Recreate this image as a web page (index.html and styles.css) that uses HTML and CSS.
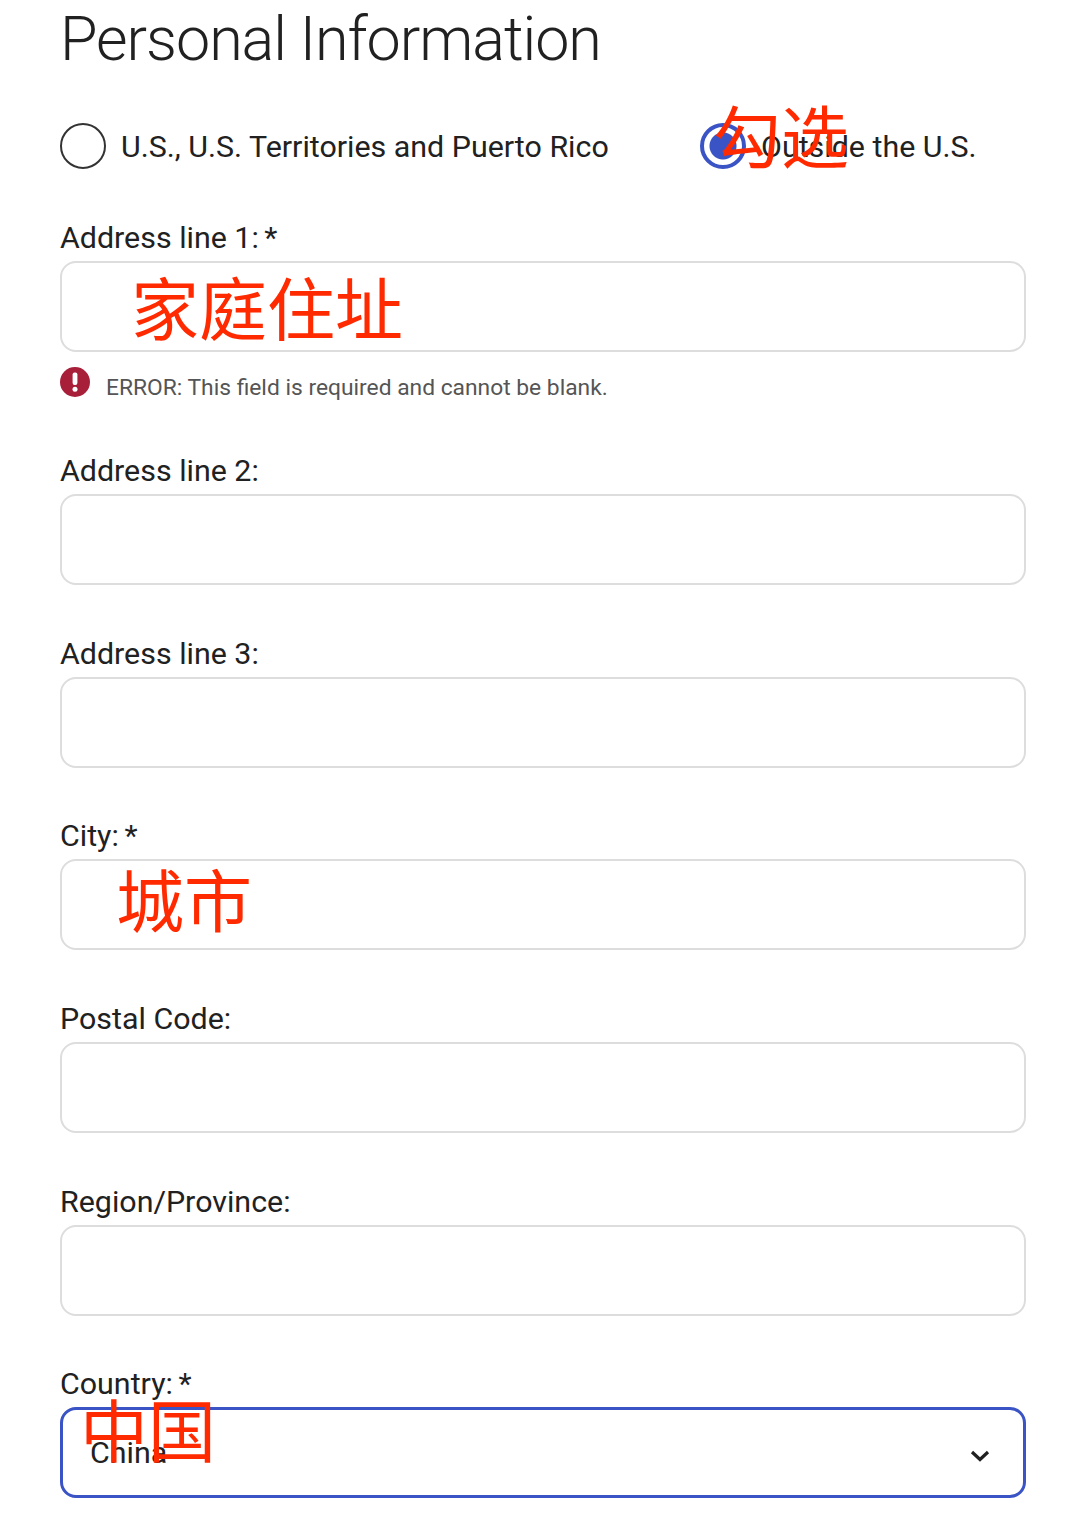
FILE: index.html
```html
<!DOCTYPE html>
<html lang="en">
<head>
<meta charset="UTF-8">
<meta name="viewport" content="width=device-width, initial-scale=1.0">
<title>Personal Information</title>
<link rel="stylesheet" href="styles.css">
</head>
<body>
<div class="container">
  <h1>Personal Information</h1>

  <div class="radios">
    <label class="radio-item first">
      <span class="radio"></span>
      <span>U.S., U.S. Territories and Puerto Rico</span>
    </label>
    <label class="radio-item">
      <span class="radio checked"></span>
      <span>Outside the U.S.</span>
      <span class="note note-radio">勾选</span>
    </label>
  </div>

  <div class="field has-error">
    <label class="field-label">Address line 1: <span class="req">*</span></label>
    <div class="box"><span class="note note-address">家庭住址</span></div>
    <div class="error">
      <svg class="error-icon" viewBox="0 0 30 30" width="30" height="30">
        <circle cx="15" cy="15" r="15" fill="#a81f3a"/>
        <rect x="12.6" y="5.5" width="4.8" height="12.5" rx="2" fill="#fff"/>
        <circle cx="15" cy="22.2" r="2.5" fill="#fff"/>
      </svg>
      <span>ERROR: This field is required and cannot be blank.</span>
    </div>
  </div>

  <div class="field">
    <label class="field-label">Address line 2:</label>
    <div class="box"></div>
  </div>

  <div class="field">
    <label class="field-label">Address line 3:</label>
    <div class="box"></div>
  </div>

  <div class="field">
    <label class="field-label">City: <span class="req">*</span></label>
    <div class="box"><span class="note note-city">城市</span></div>
  </div>

  <div class="field">
    <label class="field-label">Postal Code:</label>
    <div class="box"></div>
  </div>

  <div class="field">
    <label class="field-label">Region/Province:</label>
    <div class="box"></div>
  </div>

  <div class="field">
    <label class="field-label">Country: <span class="req">*</span></label>
    <div class="box select">
      <span class="select-value">China</span>
      <svg class="chevron" viewBox="0 0 20 14" width="20" height="14">
        <path d="M2 3 L10 10.5 L18 3" fill="none" stroke="#212121" stroke-width="3.2"/>
      </svg>
      <span class="note note-country">中国</span>
    </div>
  </div>
</div>
</body>
</html>
```

FILE: styles.css
```css
body {
  margin: 0;
  background-color: #fff;
  color: #212121;
  font-family: Roboto, "Noto Sans CJK SC", sans-serif;
}

.container {
  padding: 0 54px 0 60px;
  height: 1519px;
  box-sizing: border-box;
  overflow: hidden;
}

h1 {
  margin: 0;
  padding-top: 3px;
  font-size: 61px;
  font-weight: 300;
  line-height: 72px;
  letter-spacing: -1.05px;
}

.radios {
  display: flex;
  align-items: center;
  margin-top: 48px;
  height: 46px;
  font-size: 30.4px;
}

.radio-item {
  display: flex;
  align-items: center;
  gap: 15px;
  position: relative;
}

.radio-item.first {
  width: 640px;
}

.radio {
  width: 46px;
  height: 46px;
  box-sizing: border-box;
  border: 2px solid #333;
  border-radius: 50%;
}

.radio.checked {
  border: 4px solid #3a53c5;
  background: radial-gradient(circle, #3a53c5 0 13px, #fff 14px);
}

.field {
  margin-top: 50.67px;
}

.radios + .field {
  margin-top: 50.6px;
}

.field-label {
  display: block;
  font-size: 30.4px;
  line-height: 36px;
  margin-bottom: 5px;
}

.req {
  margin-left: -2px;
}

.box {
  position: relative;
  height: 91px;
  box-sizing: border-box;
  border: 2px solid #ddd;
  border-radius: 16px;
  background-color: #fff;
}

.select {
  display: flex;
  align-items: center;
  justify-content: space-between;
  padding: 0 33px 0 27px;
  border: 3px solid #3a53c5;
  font-size: 30.4px;
}

.chevron {
  margin-top: 6px;
}

.error {
  display: flex;
  align-items: flex-start;
  gap: 16px;
  height: 50.73px;
  padding-top: 15px;
  box-sizing: border-box;
  font-size: 22.8px;
  color: #555;
}

.error span {
  line-height: 30px;
  padding-top: 6px;
}

.error-icon {
  flex: none;
}

/* red hand-written notes on top of the form */
.note {
  position: absolute;
  color: #ff2a00;
  font-family: "Noto Sans CJK SC", sans-serif;
  font-size: 68px;
  line-height: 80px;
  white-space: nowrap;
}

.note-radio {
  left: 13px;
  top: -29px;
}

.note-address {
  left: 69px;
  top: 3px;
}

.note-city {
  left: 54px;
  top: -3px;
}

.note-country {
  left: 17px;
  top: -22px;
}
```
